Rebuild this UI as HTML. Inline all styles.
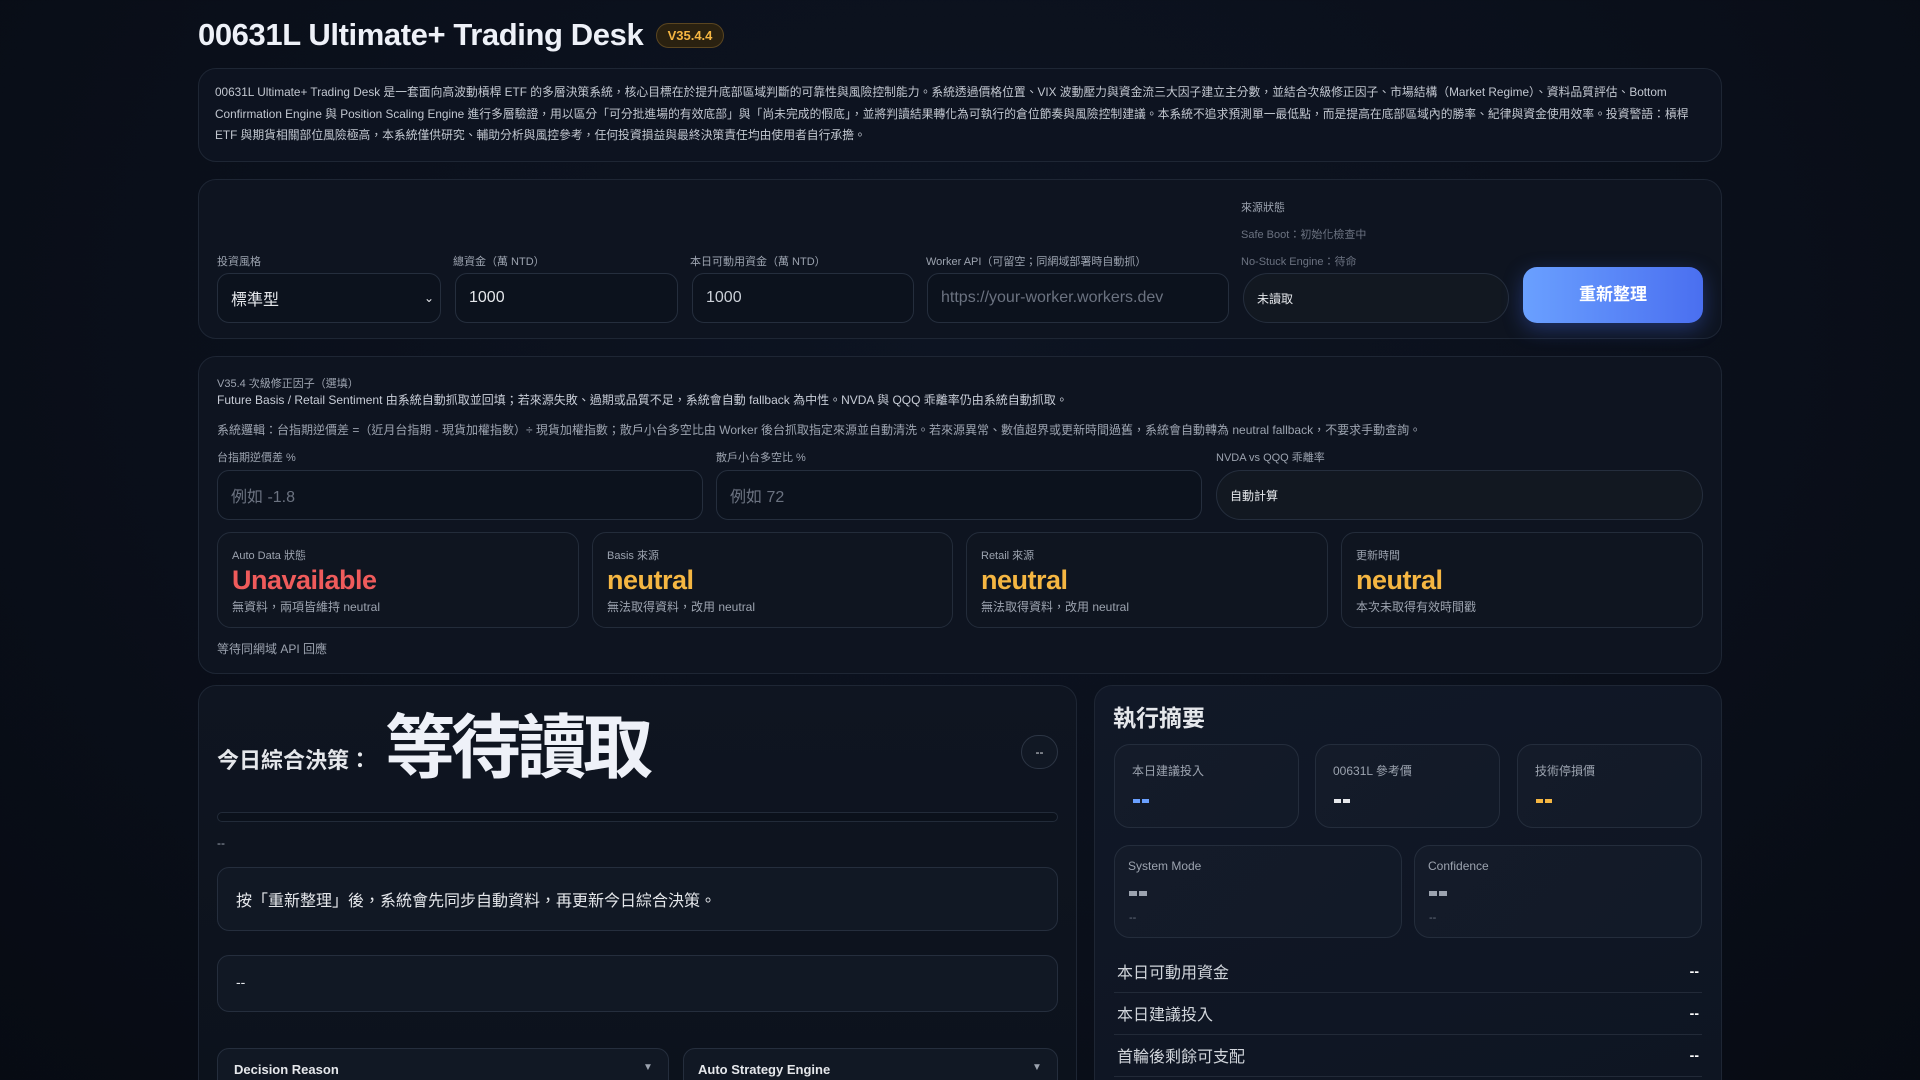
<!DOCTYPE html>
<html><head><meta charset="utf-8"><style>
*{box-sizing:border-box;margin:0;padding:0}
html{width:1920px;height:1080px;overflow:hidden}
body{width:1920px;height:1080px;overflow:hidden;background:radial-gradient(ellipse at 50% 30%,#0d1422 0%,#0a0f1a 60%,#070b13 100%);font-family:"Liberation Sans","Noto Sans CJK TC",sans-serif;color:#e5e7eb;position:relative}
.a{position:absolute}
.card{position:absolute;background:#0e1420;border:1px solid #1e2634;border-radius:18px}
.inp{position:absolute;background:#0c121d;border:1px solid #252e3d;border-radius:12px;height:50px;font-size:16px;color:#e5e7eb;padding:0 13px;display:flex;align-items:center}
.lbl{position:absolute;font-size:11px;color:#9ca3af;white-space:nowrap}
.sc{position:absolute;background:#0f1520;border:1px solid #232c3a;border-radius:14px}
.sc .l{position:absolute;left:14px;top:14px;font-size:11px;color:#9ca3af}
.sc .v{position:absolute;left:14px;top:32px;font-size:27px;font-weight:bold;color:#f5b642;letter-spacing:-0.5px}
.sc .s{position:absolute;left:14px;top:65px;font-size:12px;color:#9ca3af}
.mc{position:absolute;background:linear-gradient(135deg,#141b29,#121a28);border:1px solid #242d3c;border-radius:16px}
.row{position:absolute;left:1114px;width:588px;height:42px;border-bottom:1px solid #222a38;font-size:16px;color:#d1d5db}
.row span{position:absolute;left:3px;top:8px}
.row b{position:absolute;right:3px;top:12px;color:#fff;font-size:14px}
</style></head><body>
<div class="a" style="left:198px;top:17px;font-size:31px;font-weight:bold;color:#eef1f8;letter-spacing:-0.4px;white-space:nowrap">00631L Ultimate+ Trading Desk</div>
<div class="a" style="left:656px;top:23px;width:68px;height:25px;border:1px solid #5a4520;background:#2a2110;border-radius:13px;color:#f5b642;font-size:13px;font-weight:bold;text-align:center;line-height:23px">V35.4.4</div>

<div class="card" style="left:198px;top:68px;width:1524px;height:94px;background:#0d1320"></div>
<div class="a" style="left:215px;top:82px;width:1494px;font-size:11.8px;line-height:21.5px;color:#c2c7d0">00631L Ultimate+ Trading Desk 是一套面向高波動槓桿 ETF 的多層決策系統，核心目標在於提升底部區域判斷的可靠性與風險控制能力。系統透過價格位置、VIX 波動壓力與資金流三大因子建立主分數，並結合次級修正因子、市場結構（Market Regime）、資料品質評估、Bottom Confirmation Engine 與 Position Scaling Engine 進行多層驗證，用以區分「可分批進場的有效底部」與「尚未完成的假底」，並將判讀結果轉化為可執行的倉位節奏與風險控制建議。本系統不追求預測單一最低點，而是提高在底部區域內的勝率、紀律與資金使用效率。投資警語：槓桿 ETF 與期貨相關部位風險極高，本系統僅供研究、輔助分析與風控參考，任何投資損益與最終決策責任均由使用者自行承擔。</div>

<div class="card" style="left:198px;top:179px;width:1524px;height:160px"></div>
<div class="lbl" style="left:217px;top:253px">投資風格</div>
<div class="lbl" style="left:453px;top:253px">總資金（萬 NTD）</div>
<div class="lbl" style="left:690px;top:253px">本日可動用資金（萬 NTD）</div>
<div class="lbl" style="left:926px;top:253px">Worker API（可留空；同網域部署時自動抓）</div>
<div class="lbl" style="left:1241px;top:199px">來源狀態</div>
<div class="lbl" style="left:1241px;top:226px;color:#6b7280">Safe Boot：初始化檢查中</div>
<div class="lbl" style="left:1241px;top:253px;color:#6b7280">No-Stuck Engine：待命</div>
<div class="inp" style="left:217px;top:273px;width:224px">標準型<span style="position:absolute;right:6px;font-size:12px">⌄</span></div>
<div class="inp" style="left:455px;top:273px;width:223px">1000</div>
<div class="inp" style="left:692px;top:273px;width:222px;color:#cbd0d8">1000</div>
<div class="inp" style="left:927px;top:273px;width:302px;color:#6b7280">https://your-worker.workers.dev</div>
<div class="inp" style="left:1243px;top:273px;width:266px;border-radius:25px;background:#121821;font-size:12px">未讀取</div>
<div class="a" style="left:1523px;top:267px;width:180px;height:56px;border-radius:14px;background:linear-gradient(90deg,#6aa0ff,#4a6ff0);box-shadow:0 6px 20px rgba(70,110,240,.35);color:#fff;font-size:17px;font-weight:bold;text-align:center;line-height:56px">重新整理</div>

<div class="card" style="left:198px;top:356px;width:1524px;height:318px"></div>
<div class="lbl" style="left:217px;top:375px">V35.4 次級修正因子（選填）</div>
<div class="lbl" style="left:217px;top:391px;color:#c7ccd6;font-size:12px">Future Basis / Retail Sentiment 由系統自動抓取並回填；若來源失敗、過期或品質不足，系統會自動 fallback 為中性。NVDA 與 QQQ 乖離率仍由系統自動抓取。</div>
<div class="lbl" style="left:217px;top:421px;font-size:12px">系統邏輯：台指期逆價差 =（近月台指期 - 現貨加權指數）÷ 現貨加權指數；散戶小台多空比由 Worker 後台抓取指定來源並自動清洗。若來源異常、數值超界或更新時間過舊，系統會自動轉為 neutral fallback，不要求手動查詢。</div>
<div class="lbl" style="left:217px;top:449px">台指期逆價差 %</div>
<div class="lbl" style="left:716px;top:449px">散戶小台多空比 %</div>
<div class="lbl" style="left:1216px;top:449px">NVDA vs QQQ 乖離率</div>
<div class="inp" style="left:217px;top:470px;width:486px;color:#6b7280">例如 -1.8</div>
<div class="inp" style="left:716px;top:470px;width:486px;color:#6b7280">例如 72</div>
<div class="inp" style="left:1216px;top:470px;width:487px;border-radius:25px;background:#121821;font-size:12px">自動計算</div>
<div class="sc" style="left:217px;top:532px;width:362px;height:96px"><div class="l">Auto Data 狀態</div><div class="v" style="color:#ef5b5b">Unavailable</div><div class="s">無資料，兩項皆維持 neutral</div></div>
<div class="sc" style="left:592px;top:532px;width:361px;height:96px"><div class="l">Basis 來源</div><div class="v">neutral</div><div class="s">無法取得資料，改用 neutral</div></div>
<div class="sc" style="left:966px;top:532px;width:362px;height:96px"><div class="l">Retail 來源</div><div class="v">neutral</div><div class="s">無法取得資料，改用 neutral</div></div>
<div class="sc" style="left:1341px;top:532px;width:362px;height:96px"><div class="l">更新時間</div><div class="v">neutral</div><div class="s">本次未取得有效時間戳</div></div>
<div class="lbl" style="left:217px;top:640px;font-size:12px">等待同網域 API 回應</div>

<div class="card" style="left:198px;top:685px;width:879px;height:420px;background:linear-gradient(180deg,#0f1521,#0c121c)"></div>
<div class="a" style="left:217px;top:743px;font-size:22px;font-weight:bold;color:#e5e7eb">今日綜合決策：</div>
<div class="a" style="left:385px;top:692px;font-size:70px;font-weight:bold;color:#eef1f8;letter-spacing:-4px">等待讀取</div>
<div class="a" style="left:1021px;top:735px;width:37px;height:34px;border:1px solid #2c3544;border-radius:18px;background:#111824;font-size:12px;text-align:center;line-height:32px">--</div>
<div class="a" style="left:217px;top:812px;width:841px;height:10px;border:1px solid #222b39;border-radius:6px;background:#0b111b"></div>
<div class="a" style="left:217px;top:836px;font-size:12px;color:#9ca3af">--</div>
<div class="a" style="left:217px;top:867px;width:841px;height:64px;border:1px solid #252e3d;border-radius:12px;background:#111824"></div>
<div class="a" style="left:236px;top:887px;font-size:16px;color:#e5e7eb">按「重新整理」後，系統會先同步自動資料，再更新今日綜合決策。</div>
<div class="a" style="left:217px;top:955px;width:841px;height:57px;border:1px solid #252e3d;border-radius:12px;background:#111824"></div>
<div class="a" style="left:236px;top:974px;font-size:14px">--</div>
<div class="a" style="left:217px;top:1048px;width:452px;height:60px;border:1px solid #252e3d;border-radius:12px;background:#111824"></div>
<div class="a" style="left:234px;top:1062px;font-size:13px;font-weight:bold;color:#e5e7eb">Decision Reason</div>
<div class="a" style="left:643px;top:1062px;font-size:10px;color:#9ca3af">▼</div>
<div class="a" style="left:683px;top:1048px;width:375px;height:60px;border:1px solid #252e3d;border-radius:12px;background:#111824"></div>
<div class="a" style="left:698px;top:1062px;font-size:13px;font-weight:bold;color:#e5e7eb">Auto Strategy Engine</div>
<div class="a" style="left:1032px;top:1062px;font-size:10px;color:#9ca3af">▼</div>

<div class="card" style="left:1094px;top:685px;width:628px;height:420px;background:linear-gradient(160deg,#111827,#0e1522)"></div>
<div class="a" style="left:1113px;top:699px;font-size:23px;font-weight:bold;color:#e5e7eb">執行摘要</div>
<div class="mc" style="left:1114px;top:744px;width:185px;height:84px"><div class="a" style="left:17px;top:17px;font-size:12px;color:#9ca3af">本日建議投入</div><div class="a" style="left:18px;top:54px;width:16px;height:4px;border-left:7px solid #6aa0ff;border-right:7px solid #6aa0ff"></div></div>
<div class="mc" style="left:1315px;top:744px;width:185px;height:84px"><div class="a" style="left:17px;top:17px;font-size:12px;color:#9ca3af">00631L 參考價</div><div class="a" style="left:18px;top:54px;width:16px;height:4px;border-left:7px solid #e5e7eb;border-right:7px solid #e5e7eb"></div></div>
<div class="mc" style="left:1517px;top:744px;width:185px;height:84px"><div class="a" style="left:17px;top:17px;font-size:12px;color:#9ca3af">技術停損價</div><div class="a" style="left:18px;top:54px;width:16px;height:4px;border-left:7px solid #f5b642;border-right:7px solid #f5b642"></div></div>
<div class="mc" style="left:1114px;top:845px;width:288px;height:93px"><div class="a" style="left:13px;top:13px;font-size:12px;color:#9ca3af">System Mode</div><div class="a" style="left:14px;top:45px;width:18px;height:5px;border-left:8px solid #9ca3af;border-right:8px solid #9ca3af"></div><div class="a" style="left:14px;top:66px;font-size:11px;color:#6b7280">--</div></div>
<div class="mc" style="left:1414px;top:845px;width:288px;height:93px"><div class="a" style="left:13px;top:13px;font-size:12px;color:#9ca3af">Confidence</div><div class="a" style="left:14px;top:45px;width:18px;height:5px;border-left:8px solid #9ca3af;border-right:8px solid #9ca3af"></div><div class="a" style="left:14px;top:66px;font-size:11px;color:#6b7280">--</div></div>
<div class="row" style="top:951px"><span>本日可動用資金</span><b>--</b></div>
<div class="row" style="top:993px"><span>本日建議投入</span><b>--</b></div>
<div class="row" style="top:1035px"><span>首輪後剩餘可支配</span><b>--</b></div>
</body></html>
